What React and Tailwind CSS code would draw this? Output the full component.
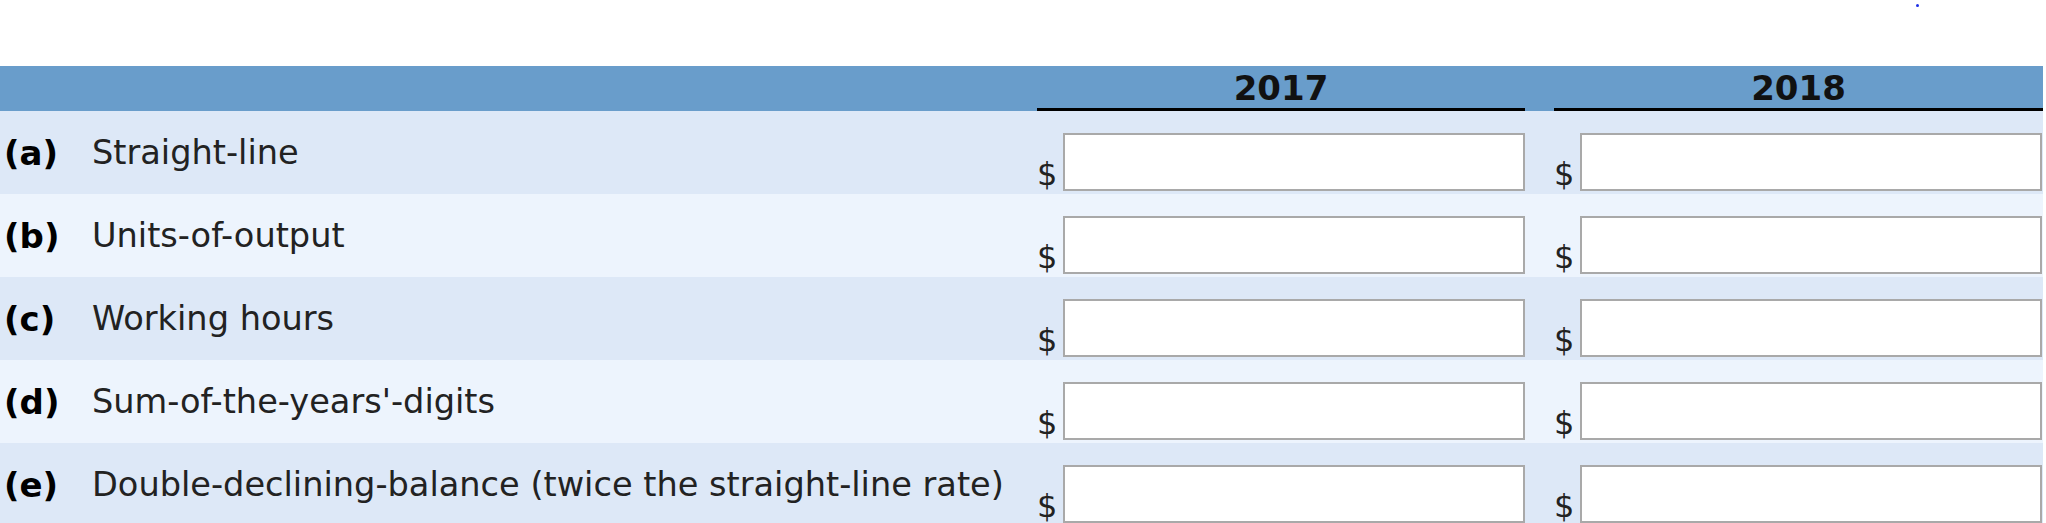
import React from 'react';

const rows = [
  { key: 'a', label: 'Straight-line' },
  { key: 'b', label: 'Units-of-output' },
  { key: 'c', label: 'Working hours' },
  { key: 'd', label: "Sum-of-the-years'-digits" },
  { key: 'e', label: 'Double-declining-balance (twice the straight-line rate)' },
];

function MoneyInput() {
  return (
    <div className="flex items-end h-full pb-[3px]">
      <span className="w-[26px] text-[32px] leading-[34px] text-[#222]">$</span>
      <input
        type="text"
        className="w-[462px] h-[58px] border-2 border-[#a9a9a9] bg-white outline-none"
      />
    </div>
  );
}

export default function App() {
  return (
    <div className="w-[2046px] bg-white font-['DejaVu_Sans',sans-serif]">
      {/* top strip with the stray dot */}
      <div className="h-[66px] pl-[1916px] pt-[4px]">
        <div className="w-[3px] h-[3px] rounded-full bg-[#1d2fe6]"></div>
      </div>

      <div className="w-[2043px] grid grid-cols-[1037px_488px_29px_489px]">
        {/* header */}
        <div className="h-[45px] bg-[#699dcb]"></div>
        <div className="h-[45px] bg-[#699dcb] flex flex-col justify-between pt-[2px]">
          <span className="text-center text-[34px] leading-[40px] font-bold text-[#111]">2017</span>
          <div className="h-[3px] bg-black"></div>
        </div>
        <div className="h-[45px] bg-[#699dcb]"></div>
        <div className="h-[45px] bg-[#699dcb] flex flex-col justify-between pt-[2px]">
          <span className="text-center text-[34px] leading-[40px] font-bold text-[#111]">2018</span>
          <div className="h-[3px] bg-black"></div>
        </div>

        {rows.map((r, i) => {
          const bg = i % 2 === 0 ? 'bg-[#dde8f7]' : 'bg-[#edf4fd]';
          return (
            <React.Fragment key={r.key}>
              <div className={`h-[83px] flex items-center pt-[2px] ${bg}`}>
                <span className="w-[92px] pl-[4px] text-[34px] font-bold text-black">({r.key})</span>
                <span className="text-[33.6px] text-[#222] whitespace-nowrap">{r.label}</span>
              </div>
              <div className={`h-[83px] ${bg}`}>
                <MoneyInput />
              </div>
              <div className={`h-[83px] ${bg}`}></div>
              <div className={`h-[83px] ${bg}`}>
                <MoneyInput />
              </div>
            </React.Fragment>
          );
        })}
      </div>
    </div>
  );
}
